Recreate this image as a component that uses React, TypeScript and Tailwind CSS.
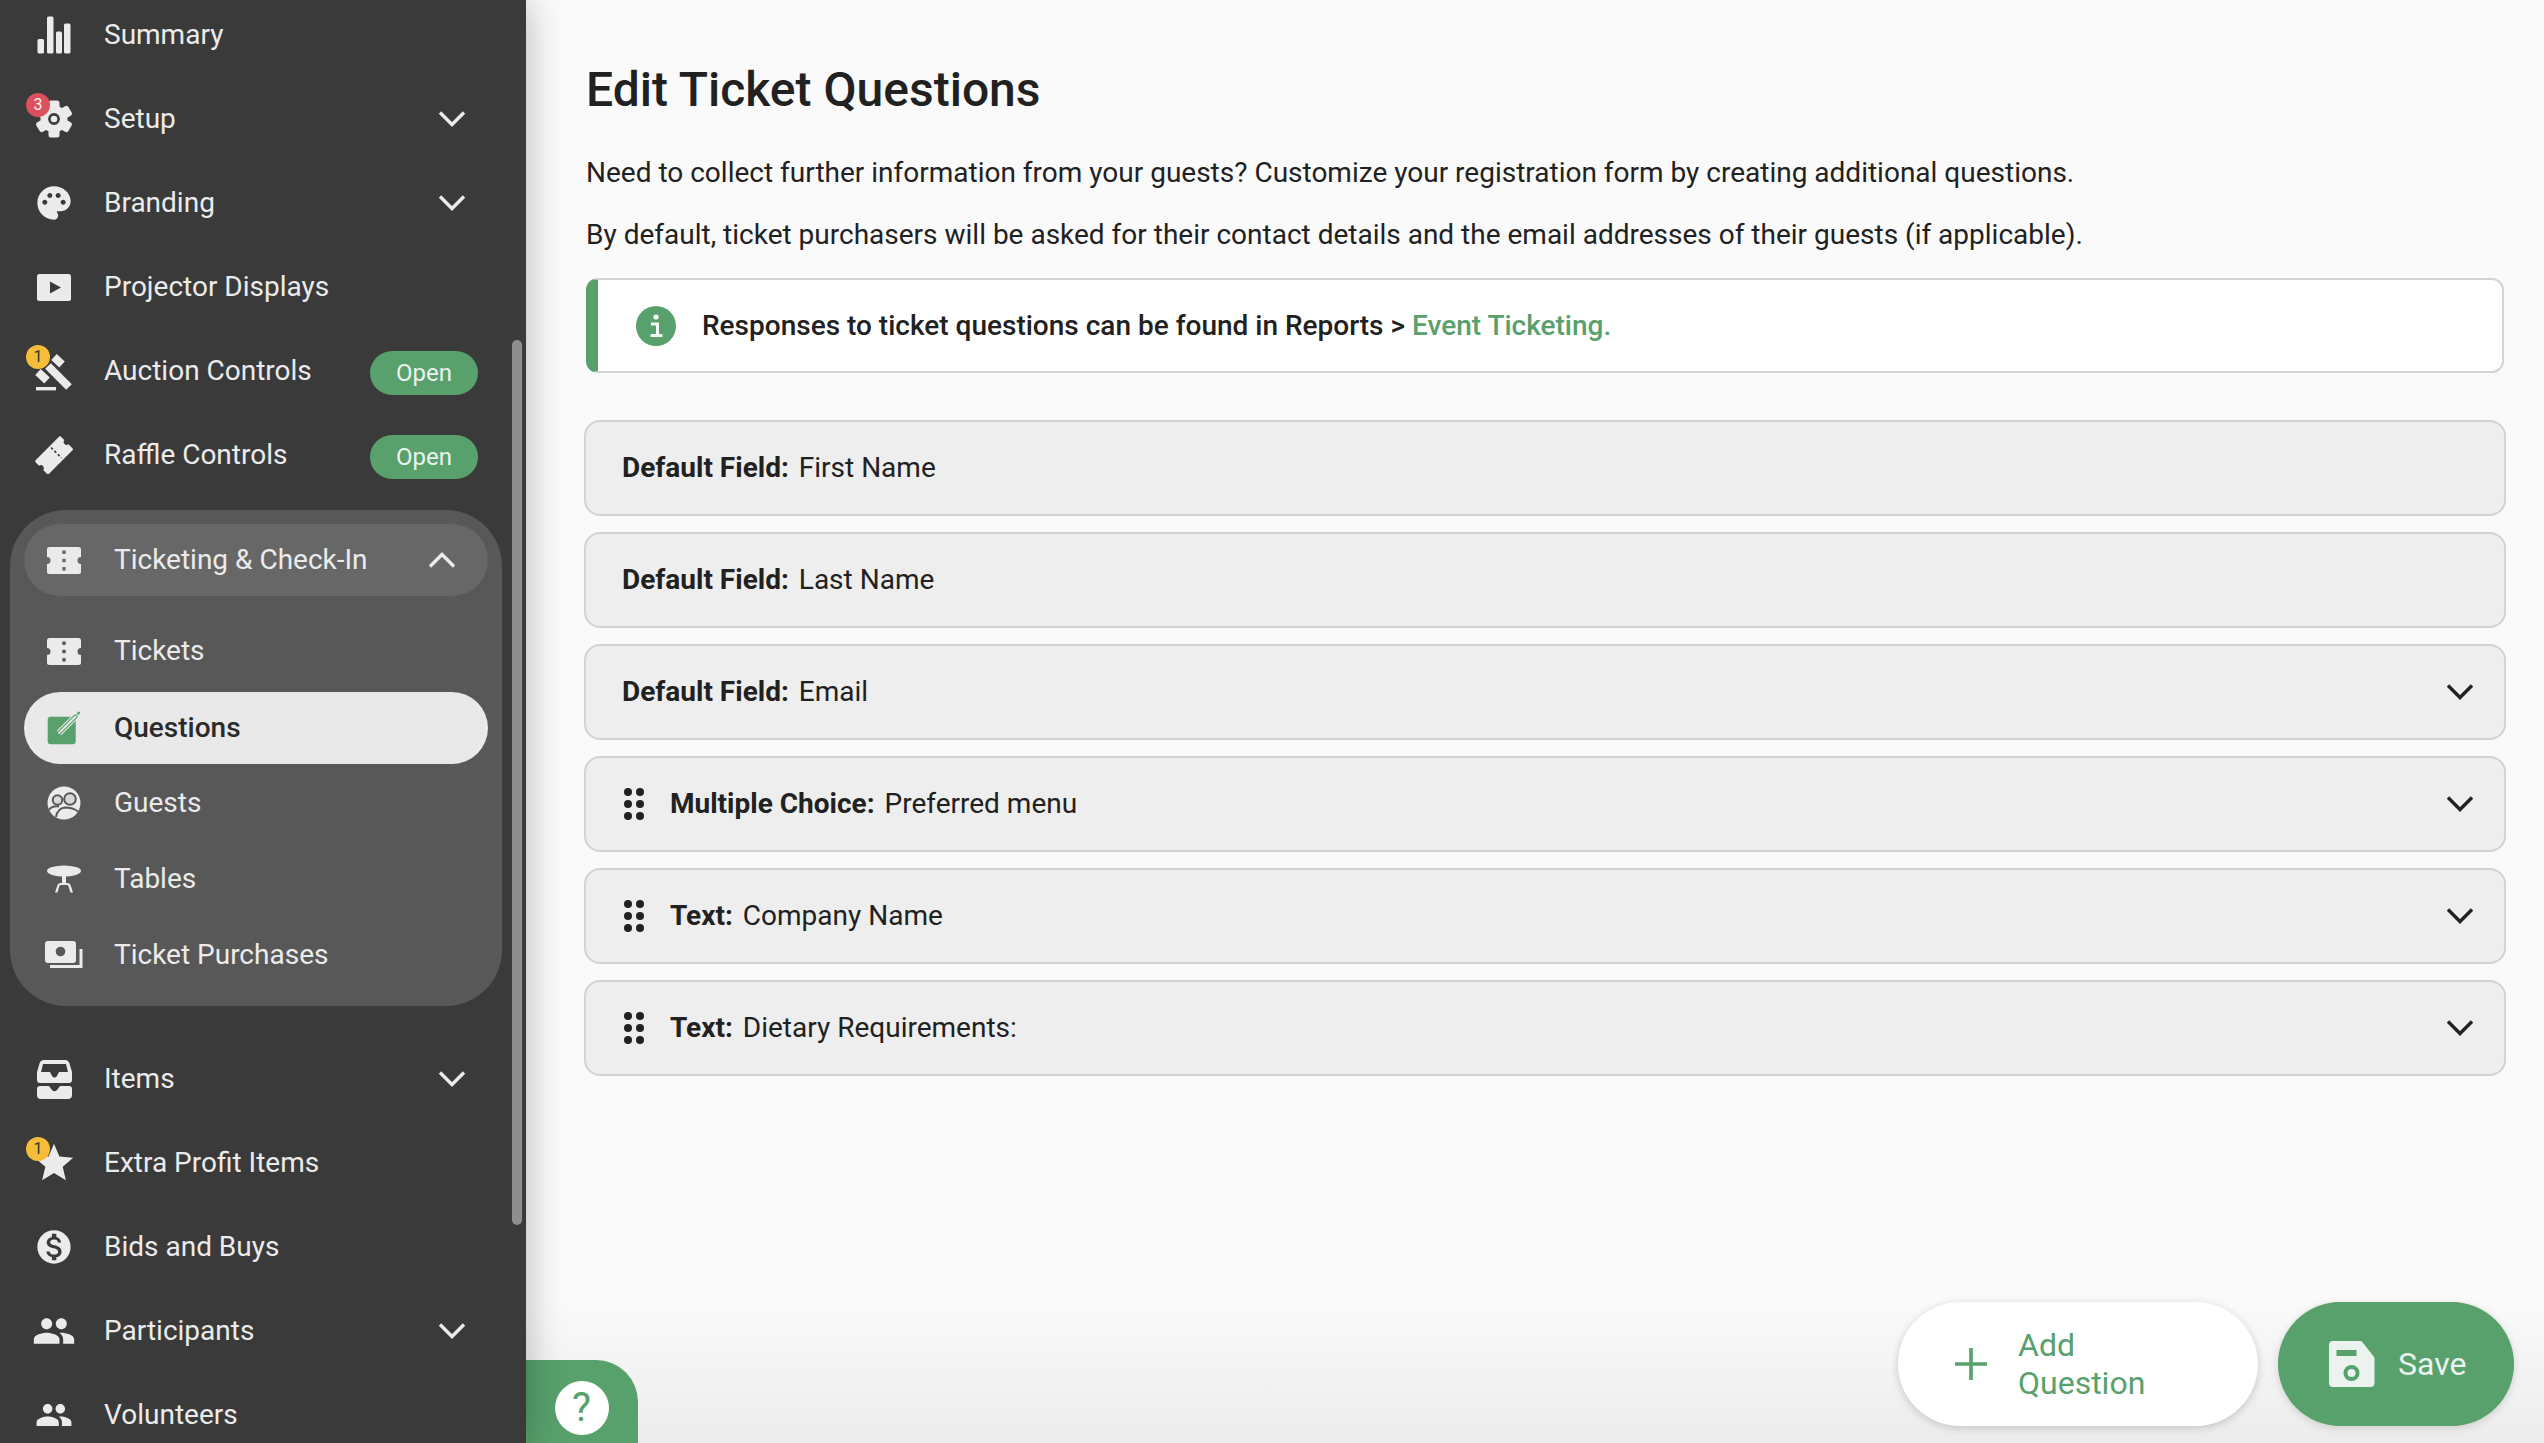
import React from "react";
import { MdPalette, MdStar, MdMonetizationOn, MdPeople } from "react-icons/md";

const Chevron = ({ up = false, className = "" }: { up?: boolean; className?: string }) => (
  <svg width="28" height="18" viewBox="0 0 28 18" fill="none" stroke="currentColor" strokeWidth="3.4" className={className}>
    <path d={up ? "M2 15.5 14 3.5l12 12" : "M2 2.5l12 12 12-12"} />
  </svg>
);

const Bars = () => (
  <svg width="34" height="38" viewBox="0 0 34 38" fill="currentColor">
    <rect x="0.5" y="23" width="6.5" height="14.5" rx="1.5" />
    <rect x="10" y="0.5" width="6.5" height="37" rx="1.5" />
    <rect x="19" y="15.5" width="6" height="22" rx="1.5" />
    <rect x="27" y="7.5" width="6.5" height="30" rx="1.5" />
  </svg>
);
const Gear = () => (
  <svg width="38" height="38" viewBox="0 0 38 38">
    <g fill="currentColor">
      {[0, 60, 120, 180, 240, 300].map((a) => (
        <rect key={a} x="13.5" y="0.5" width="11" height="10" rx="2.5" transform={`rotate(${a} 19 19)`} />
      ))}
      <circle cx="19" cy="19" r="13.5" />
    </g>
    <circle cx="19" cy="19" r="4.6" fill="none" stroke="#3a3a3a" strokeWidth="2.6" />
  </svg>
);
const Play = () => (
  <svg width="34" height="27" viewBox="0 0 34 27">
    <rect width="34" height="27" rx="2.5" fill="currentColor" />
    <path d="M13 7.5 24 13.5 13 19.5z" fill="#3a3a3a" />
  </svg>
);
const Gavel = () => (
  <svg width="48" height="48" viewBox="10 7 48 48" fill="none" stroke="currentColor">
    <path d="M34 17l8 7.500M18 32l9 8.500M28 26l21 21" strokeWidth="8" />
    <path d="M16 48.700h20" strokeWidth="3.400" />
  </svg>
);
const RaffleTicket = () => (
  <svg width="38" height="39" viewBox="0 0 38 39" fill="currentColor">
    <path d="M26 .8l3.300 3.300a3 3 0 0 0 4.200 4.200l4 4c.6.6.6 1.400 0 2L14 37.800c-.6.6-1.400.6-2 0l-3.800-3.800a3 3 0 0 0-4.200-4.200L.6 26.300c-.6-.6-.6-1.400 0-2L24 .8c.6-.6 1.400-.6 2 0z" />
    <path d="M16 11.500l10.500 10.500" stroke="#3a3a3a" strokeWidth="1.600" strokeDasharray="2.600 2.200" fill="none" />
  </svg>
);
const Ticket = ({ bg }: { bg: string }) => (
  <svg width="34" height="27" viewBox="0 0 34 27">
    <path d="M2.500 0h29A2.500 2.500 0 0 1 34 2.500V10a3.500 3.500 0 0 0 0 7v7.500a2.500 2.500 0 0 1-2.500 2.500h-29A2.500 2.500 0 0 1 0 24.500V17a3.500 3.500 0 0 0 0-7V2.500A2.500 2.500 0 0 1 2.500 0z" fill="currentColor" />
    <rect x="15.300" y="3.500" width="3.400" height="3.400" fill={bg} />
    <rect x="15.300" y="11.800" width="3.400" height="3.400" fill={bg} />
    <rect x="15.300" y="20.100" width="3.400" height="3.400" fill={bg} />
  </svg>
);
const EditGreen = () => (
  <svg width="34" height="34" viewBox="0 0 34 34">
    <rect x="0.700" y="5.700" width="28" height="27.500" rx="3" fill="#58a06c" />
    <path d="M12 22 L28.500 5.500" stroke="#e9e9e9" strokeWidth="6.400" fill="none" />
    <path d="M12 22 L28.500 5.500" stroke="#58a06c" strokeWidth="4.200" strokeLinecap="round" fill="none" />
    <path d="M12 22 L28.500 5.500" stroke="#e9e9e9" strokeWidth="1.800" strokeLinecap="round" fill="none" />
    <path d="M30.500 3.200 L32.500 1.200" stroke="#58a06c" strokeWidth="2.400" />
  </svg>
);
const Guests = () => (
  <svg width="34" height="34" viewBox="0 0 34 34">
    <circle cx="17" cy="17" r="16.500" fill="currentColor" />
    <circle cx="10.500" cy="14" r="4.800" fill="#d8d8d8" stroke="#585858" strokeWidth="2" />
    <circle cx="23" cy="13" r="5.800" fill="#d8d8d8" stroke="#585858" strokeWidth="2" />
    <path d="M9 31c1-6 4-9 9-9.500 5 0 10 1.500 13 4" fill="none" stroke="#585858" strokeWidth="2" />
    <path d="M2 24c2-3 6-4 10-3.500" fill="none" stroke="#585858" strokeWidth="2" />
  </svg>
);
const TableIcon = () => (
  <svg width="34" height="28" viewBox="0 0 34 28" fill="currentColor">
    <ellipse cx="17" cy="6" rx="17" ry="5.500" />
    <rect x="15" y="10" width="4" height="8" />
    <path d="M8 27.500l2.500-7.500q1-2 3-2h7q2 0 3 2l2.500 7.500h-2.600l-2-6.500q-.5-1-1.500-1h-6q-1 0-1.500 1l-2 6.500z" />
  </svg>
);
const Purchases = () => (
  <svg width="38" height="28" viewBox="0 0 38 28">
    <rect x="0" y="0" width="31" height="22" rx="3" fill="currentColor" />
    <circle cx="15.500" cy="10.500" r="4.800" fill="#585858" />
    <path d="M36 8v17.500H5" fill="none" stroke="currentColor" strokeWidth="3" />
  </svg>
);
const Items = () => (
  <svg width="35" height="39" viewBox="0 0 35 39" fill="currentColor">
    <path fillRule="evenodd" d="M7 0h21q3.500 0 4.500 3.500L35 12v8q0 3-3 3H3q-3 0-3-3v-8l2.500-8.500Q3.500 0 7 0zM6 4 4 12h9l2 4q2.500 3 5 0l2-4h9l-2-8z" />
    <path d="M3 26h9l3 4q2.500 2.500 5 0l3-4h9q3 0 3 3v6q0 4-4 4H4q-4 0-4-4v-6q0-3 3-3z" />
  </svg>
);

type NavRow = {
  label: string;
  icon: React.ReactNode;
  badge?: { n: string; color: string; fg: string };
  chevron?: boolean;
  open?: boolean;
};

const Badge = ({ n, color, fg }: { n: string; color: string; fg: string }) => (
  <span
    className={`absolute left-[-4px] top-[-2px] z-10 flex h-6 w-6 items-center justify-center rounded-full text-[16px] leading-none ${color} ${fg}`}
  >
    {n}
  </span>
);

const Row = ({ label, icon, badge, chevron, open }: NavRow) => (
  <div className="flex h-[84px] items-center pl-[30px]">
    <span className="relative flex h-12 w-12 items-center justify-center text-[#ebebeb]">
      {badge && <Badge {...badge} />}
      {icon}
    </span>
    <span className="ml-[26px] text-[28px] text-[#ebebeb]">{label}</span>
    {chevron && <Chevron className="ml-auto mr-[60px] text-[#ebebeb]" />}
    {open && (
      <span className="ml-auto mr-[48px] mt-1 flex h-11 w-[108px] items-center justify-center rounded-full bg-[#58a06c] text-[24px] text-[#ebf3ed]">
        Open
      </span>
    )}
  </div>
);

const SubRow = ({ label, icon, active }: { label: string; icon: React.ReactNode; active?: boolean }) => (
  <div className={`mx-[14px] flex h-[72px] items-center rounded-full pl-[15px] ${active ? "bg-[#e9e9e9] text-[#2b2b2b]" : "text-[#ebebeb]"}`}>
    <span className="flex h-10 w-[50px] items-center justify-center">{icon}</span>
    <span className={`ml-[25px] text-[28px] ${active ? "font-medium" : ""}`}>{label}</span>
  </div>
);

const Drag = () => (
  <svg width="22" height="32" viewBox="0 0 22 32" fill="#222">
    {[4, 16, 28].map((y) => (
      <React.Fragment key={y}>
        <circle cx="6" cy={y} r="4" />
        <circle cx="18" cy={y} r="4" />
      </React.Fragment>
    ))}
  </svg>
);

const Field = ({ kind, name, drag, chevron }: { kind: string; name: string; drag?: boolean; chevron?: boolean }) => (
  <div className="flex h-[96px] items-center rounded-[16px] border-2 border-[#d3d3d3] bg-[#eeeeee] pl-[36px] pr-[30px] text-[28px] text-[#212121]">
    {drag && (
      <span className="mr-[26px] flex">
        <Drag />
      </span>
    )}
    <span className="font-bold">{kind}</span>
    <span className="ml-[10px]">{name}</span>
    {chevron && <Chevron className="ml-auto text-[#222]" />}
  </div>
);

const Save = () => (
  <svg width="46" height="46" viewBox="0 0 46 46">
    <path d="M4 0h27q1.500 0 2.500 1.300l11 14q1 1.200 1 2.700v24q0 4-4 4H4q-4 0-4-4V4q0-4 4-4z" fill="#eaf3ed" />
    <rect x="7.500" y="9" width="20" height="6" fill="#58a06c" />
    <circle cx="22.500" cy="32" r="6" fill="none" stroke="#58a06c" strokeWidth="4" />
  </svg>
);

export default function App() {
  return (
    <div className="relative flex h-[1443px] w-[2544px] overflow-hidden bg-[#fafafa] font-[Roboto,sans-serif]">
      <aside className="relative z-20 h-full w-[526px] shrink-0 overflow-hidden bg-[#3a3a3a] shadow-[0_0_36px_rgba(0,0,0,0.28)]">
        <div className="-mt-[7px]">
          <Row label="Summary" icon={<Bars />} />
          <Row label="Setup" chevron icon={<Gear />} badge={{ n: "3", color: "bg-[#dc4f5b]", fg: "text-[#f4f4f4]" }} />
          <Row label="Branding" chevron icon={<MdPalette size={40} color="#ebebeb" />} />
          <Row label="Projector Displays" icon={<Play />} />
          <Row label="Auction Controls" open icon={<Gavel />} badge={{ n: "1", color: "bg-[#f5bd3a]", fg: "text-[#333]" }} />
          <Row label="Raffle Controls" open icon={<RaffleTicket />} />

          <section className="mx-[10px] mb-[31px] mt-[13px] w-[492px] rounded-[56px] bg-[#585858] pb-[13px] pt-[14px]">
            <div className="mx-[14px] flex h-[72px] items-center rounded-full bg-[#676767] pl-[15px] text-[#ebebeb]">
              <span className="flex h-10 w-[50px] items-center justify-center"><Ticket bg="#676767" /></span>
              <span className="ml-[25px] text-[28px]">Ticketing &amp; Check-In</span>
              <Chevron up className="ml-auto mr-[32px]" />
            </div>
            <div className="mt-[17px] flex h-[76px] flex-col justify-center">
              <SubRow label="Tickets" icon={<Ticket bg="#585858" />} />
            </div>
            <div className="mt-[3px] flex h-[72px] flex-col justify-center">
              <SubRow label="Questions" active icon={<EditGreen />} />
            </div>
            <div className="mt-[1px] flex h-[76px] flex-col justify-center">
              <SubRow label="Guests" icon={<Guests />} />
            </div>
            <div className="flex h-[76px] flex-col justify-center">
              <SubRow label="Tables" icon={<TableIcon />} />
            </div>
            <div className="flex h-[76px] flex-col justify-center">
              <SubRow label="Ticket Purchases" icon={<Purchases />} />
            </div>
          </section>

          <Row label="Items" chevron icon={<Items />} />
          <Row label="Extra Profit Items" icon={<MdStar size={46} color="#ebebeb" />} badge={{ n: "1", color: "bg-[#f5bd3a]", fg: "text-[#333]" }} />
          <Row label="Bids and Buys" icon={<MdMonetizationOn size={40} color="#ebebeb" />} />
          <Row label="Participants" chevron icon={<MdPeople size={44} color="#ebebeb" />} />
          <Row label="Volunteers" icon={<MdPeople size={38} color="#ebebeb" />} />
        </div>
        <div className="absolute left-[512px] top-[340px] h-[885px] w-[10px] rounded-full bg-[#8e8e8e]" />
      </aside>

      <main className="relative flex-1 pl-[58px] pr-[38px] pt-[62px] text-[#212121]">
        <h1 className="ml-[2px] text-[48px] font-medium leading-[56px]">Edit Ticket Questions</h1>
        <p className="ml-[2px] mt-[35px] text-[28px] leading-[40px]">
          Need to collect further information from your guests? Customize your registration form by creating additional questions.
        </p>
        <p className="ml-[2px] mt-[22px] text-[28px] leading-[40px]">
          By default, ticket purchasers will be asked for their contact details and the email addresses of their guests (if applicable).
        </p>
        <div className="mx-[2px] mt-[23px] flex h-[95px] items-center rounded-[12px] border-2 border-l-[12px] border-[#d3d3d3] border-l-[#58a06c] bg-white pl-[38px] text-[28px] font-medium">
          <svg width="40" height="40" viewBox="0 0 40 40" className="shrink-0">
            <circle cx="20" cy="20" r="20" fill="#58a06c" />
            <circle cx="20" cy="11" r="2.600" fill="#f4f9f6" />
            <path d="M15 18h6.500v11M14.500 29.500h12" fill="none" stroke="#f4f9f6" strokeWidth="3" />
          </svg>
          <span className="ml-[26px]">
            Responses to ticket questions can be found in Reports &gt; <span className="text-[#58a06c]">Event Ticketing.</span>
          </span>
        </div>
        <div className="mt-[47px] flex flex-col gap-4">
          <Field kind="Default Field:" name="First Name" />
          <Field kind="Default Field:" name="Last Name" />
          <Field kind="Default Field:" name="Email" chevron />
          <Field kind="Multiple Choice:" name="Preferred menu" drag chevron />
          <Field kind="Text:" name="Company Name" drag chevron />
          <Field kind="Text:" name="Dietary Requirements:" drag chevron />
        </div>

        <div className="absolute bottom-0 left-0 right-0 h-[140px] bg-gradient-to-b from-[#fafafa00] to-[#ececec]" />

        <div className="absolute left-0 top-[1360px] flex h-[83px] w-[112px] items-start justify-center rounded-tr-[42px] bg-[#58a06c] pt-[21px]">
          <span className="ml-[-1px] flex h-[54px] w-[54px] items-center justify-center rounded-full bg-white text-[40px] leading-none text-[#58a06c]">?</span>
        </div>

        <div className="absolute bottom-[17px] right-[30px] flex gap-[20px]">
          <button className="flex h-[124px] w-[360px] items-center rounded-full bg-white pl-[56px] text-[32px] leading-[38px] text-[#58a06c] shadow-[0_2px_8px_rgba(0,0,0,0.18)]">
            <svg width="34" height="34" viewBox="0 0 34 34" fill="none" stroke="currentColor" strokeWidth="3.600" className="shrink-0">
              <path d="M17 1v32M1 17h32" />
            </svg>
            <span className="ml-[30px] text-left">Add<br />Question</span>
          </button>
          <button className="flex h-[124px] w-[236px] items-center rounded-full bg-[#58a06c] pl-[51px] text-[32px] text-[#eaf3ed] shadow-[0_2px_8px_rgba(0,0,0,0.14)]">
            <Save />
            <span className="ml-[23px]">Save</span>
          </button>
        </div>
      </main>
    </div>
  );
}
